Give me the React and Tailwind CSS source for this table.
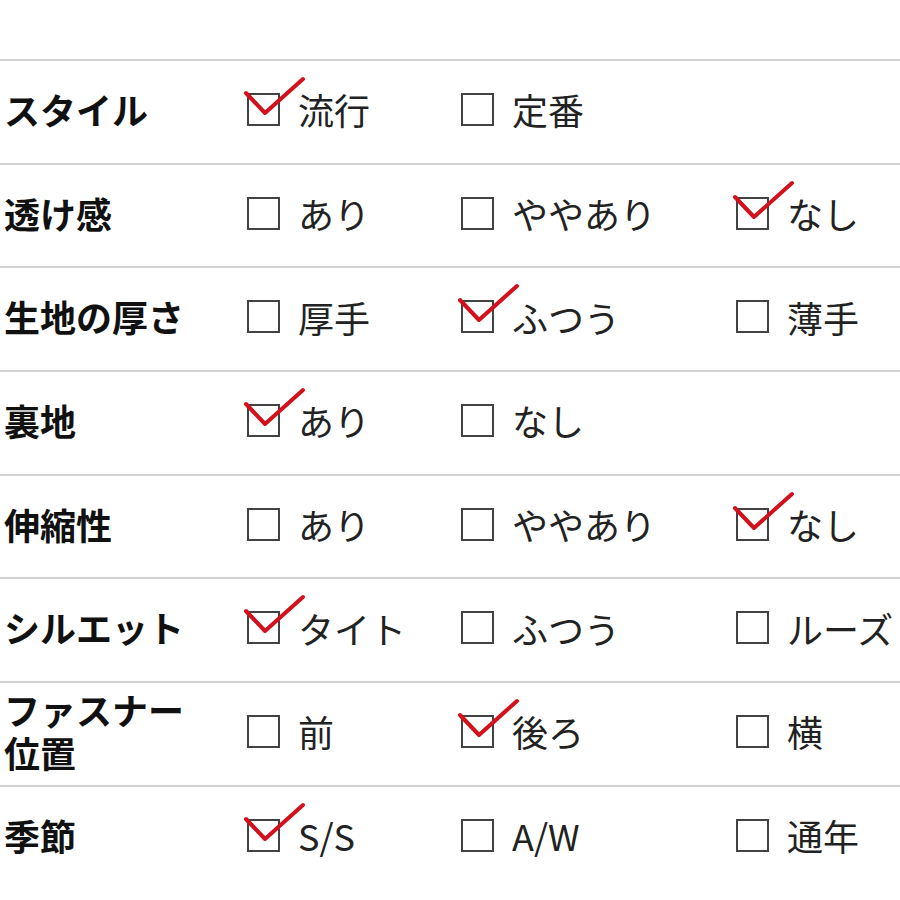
import React from 'react';

const rows = [
  { label: ['スタイル'], options: [['流行', true], ['定番', false]] },
  { label: ['透け感'], options: [['あり', false], ['ややあり', false], ['なし', true]] },
  { label: ['生地の厚さ'], options: [['厚手', false], ['ふつう', true], ['薄手', false]] },
  { label: ['裏地'], options: [['あり', true], ['なし', false]] },
  { label: ['伸縮性'], options: [['あり', false], ['ややあり', false], ['なし', true]] },
  { label: ['シルエット'], options: [['タイト', true], ['ふつう', false], ['ルーズ', false]] },
  { label: ['ファスナー', '位置'], options: [['前', false], ['後ろ', true], ['横', false]] },
  { label: ['季節'], options: [['S/S', true], ['A/W', false], ['通年', false]] },
];

const colWidths = ['w-[214px]', 'w-[275px]', 'flex-1'];

function Checkbox({ checked }) {
  return (
    <div className="relative w-[33px] h-[33px] shrink-0 border-2 border-[#424242] bg-white">
      {checked && (
        <svg
          className="absolute -left-[2px] -top-[2px]"
          width="33"
          height="33"
          viewBox="0 0 33 33"
          overflow="visible"
        >
          <path
            d="M-1 0 L18 20 L56 -14"
            fill="none"
            stroke="#d3111c"
            strokeWidth="4"
            strokeLinecap="round"
            strokeLinejoin="round"
          />
        </svg>
      )}
    </div>
  );
}

export default function App() {
  return (
    <div
      className="w-[900px] h-[900px] bg-white overflow-hidden pt-[59px]"
      style={{ fontFamily: '"Noto Sans CJK JP", "Noto Sans", sans-serif' }}
    >
      {rows.map((row, i) => (
        <div key={i} className="flex items-center h-[103.7px] pb-[5px] border-t-2 border-[#d2d2d2]">
          <div className="w-[247px] shrink-0 pl-[4px] text-[36px] leading-[43px] font-bold text-[#111]">
            {row.label.map((l, j) => (
              <React.Fragment key={j}>
                {j > 0 && <br />}
                {l}
              </React.Fragment>
            ))}
          </div>
          {row.options.map(([text, checked], k) => (
            <div key={k} className={`${colWidths[k]} flex items-center gap-[18px] shrink-0`}>
              <Checkbox checked={checked} />
              <span className="text-[36px] leading-none text-[#222] whitespace-nowrap">{text}</span>
            </div>
          ))}
        </div>
      ))}
    </div>
  );
}
